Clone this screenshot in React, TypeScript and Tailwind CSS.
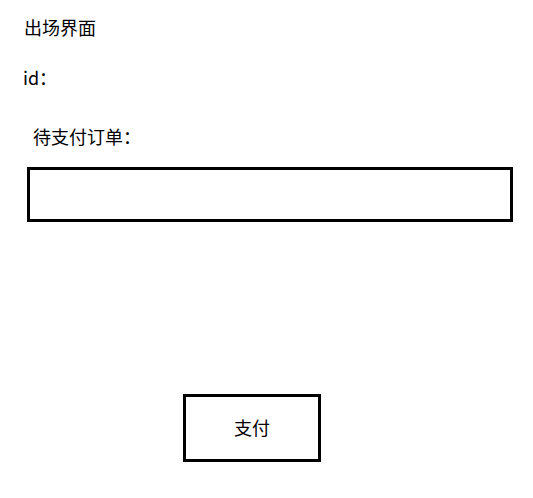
export default function App() {
  return (
    <div
      className="w-[533px] h-[498px] bg-white text-black overflow-hidden"
      style={{ fontFamily: '"Noto Sans CJK SC", "Noto Sans", sans-serif' }}
    >
      <div className="pt-[14px] pl-[24px] text-[18px] leading-[26px]">出场界面</div>
      <div className="mt-[24px] pl-[23px] text-[18px] leading-[26px]">id：</div>
      <div className="mt-[33px] pl-[33px] text-[18px] leading-[26px]">待支付订单：</div>
      <div className="mt-[18px] ml-[27px] w-[486px] h-[55px] border-[3px] border-black"></div>
      <div className="mt-[172px] ml-[183px] w-[138px] h-[68px] border-[3px] border-black flex items-center justify-center text-[18px] pb-[2px]">
        支付
      </div>
    </div>
  );
}
